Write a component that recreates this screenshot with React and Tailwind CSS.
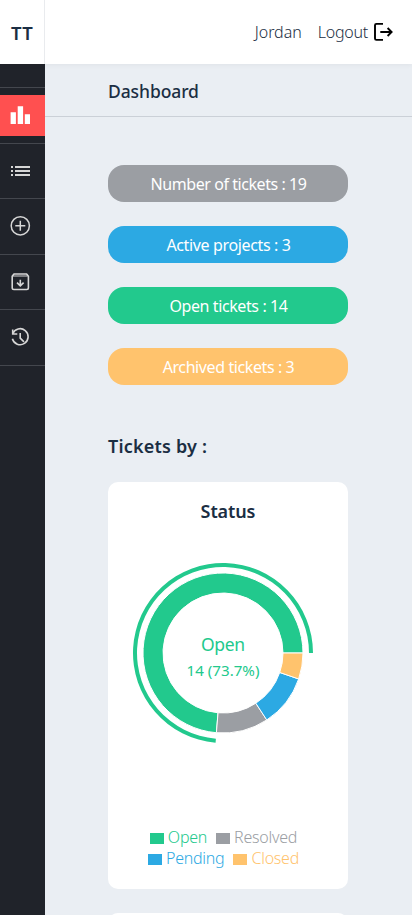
const STATS = [
  { label: "Number of tickets : 19", color: "bg-[#9b9ea3]", track: "tracking-[-0.44px]" },
  { label: "Active projects : 3", color: "bg-[#2ca9e3]", track: "tracking-[-0.36px]" },
  { label: "Open tickets : 14", color: "bg-[#22c98d]", track: "tracking-[-0.4px]" },
  { label: "Archived tickets : 3", color: "bg-[#ffc36d]", track: "tracking-[-0.4px]" },
];

const SLICES = [
  { value: 14, color: "#22c98d" },
  { value: 2, color: "#9b9ea3" },
  { value: 2, color: "#2ca9e3" },
  { value: 1, color: "#ffc36d" },
];

const point = (r, a) => `${115 + r * Math.cos(a)} ${115 - r * Math.sin(a)}`;

function ring(inner, outer, start, end) {
  const large = end - start > Math.PI ? 1 : 0;
  return `M${point(outer, start)}A${outer} ${outer} 0 ${large} 0 ${point(outer, end)}L${point(inner, end)}A${inner} ${inner} 0 ${large} 1 ${point(inner, start)}Z`;
}

function Donut() {
  let angle = 0;
  const parts = SLICES.map((slice) => {
    const start = angle;
    angle += (slice.value / 19) * Math.PI * 2;
    return { ...slice, start, end: angle };
  });
  return (
    <svg className="size-[230px]" viewBox="0 0 230 230">
      {parts.map((p) => (
        <path key={p.color} d={ring(60, 80, p.start, p.end)} fill={p.color} stroke="#fff" />
      ))}
      <path d={ring(86, 90, parts[0].start, parts[0].end)} fill="#22c98d" />
      <text x="115" y="113" textAnchor="middle" textLength="44" className="fill-[#22c98d] text-[17.5px]">Open</text>
      <text x="115" y="138" textAnchor="middle" textLength="73" lengthAdjust="spacingAndGlyphs" className="fill-[#22c98d] text-[15px]">14 (73.7%)</text>
    </svg>
  );
}

function Icon({ children, className = "" }) {
  return (
    <svg className={`size-[22px] ${className}`} viewBox="0 0 22 22" fill="none" stroke="currentColor" strokeWidth="1.6">
      {children}
    </svg>
  );
}

const BarsIcon = () => (
  <Icon>
    <path d="M.6 8.2h5.3V20H.6zM7.7 2.2h5.4V20H7.7zM14.8 10.2h5.2V20h-5.2z" fill="currentColor" stroke="none" />
  </Icon>
);

const ListIcon = () => (
  <Icon>
    <path d="M1 7h2M5 7h15M1 11h2M5 11h15M1 15h2M5 15h15" strokeWidth="2" />
  </Icon>
);

const PlusIcon = () => (
  <Icon>
    <circle cx="10.3" cy="10.8" r="9.1" strokeWidth="1.5" />
    <path d="M10.3 5.8v10M5.3 10.8h10" strokeWidth="1.5" />
  </Icon>
);

const ArchiveIcon = () => (
  <Icon>
    <path d="M2.2 5.3 4 3h12.6l1.8 2.3v11.5q0 1.7-1.7 1.7H3.9q-1.7 0-1.7-1.7z" strokeLinejoin="round" />
    <path d="M3 5h14.6" strokeWidth="1" />
    <path d="M10.3 8.8v5.8M7 11.6l3.3 3.2 3.3-3.2" />
  </Icon>
);

const HistoryIcon = () => (
  <Icon>
    <path d="M2.7 7.7A8 8 0 1 1 2.4 12.8" />
    <path d="M2.7 3.6V8h4.6" />
    <path d="M10.2 7.1v5l3.8 3.8" />
  </Icon>
);

const LogoutIcon = () => (
  <Icon className="text-black">
    <path d="M11 2.9H4.4q-1.4 0-1.4 1.4v13.2q0 1.4 1.4 1.4H11" strokeWidth="1.9" />
    <path d="M8.3 11h11M15.6 7l4 4-4 4" strokeWidth="1.9" />
  </Icon>
);

function NavItem({ children, active }) {
  return (
    <div className="flex h-[55.5px] items-center border-t border-[#44474e]">
      <div className={`flex h-[41px] w-full items-center pl-[10px] ${active ? "bg-[#ff5050] text-white" : "text-[#d6d6d6]"}`}>{children}</div>
    </div>
  );
}

function Legend({ swatch, text, children }) {
  return (
    <div className="flex items-center gap-1">
      <span className={`mt-[2px] h-[11px] w-[14px] ${swatch}`} />
      <span className={text}>{children}</span>
    </div>
  );
}

export default function App() {
  return (
    <div className="flex h-[915px] w-[412px] flex-col overflow-hidden bg-[#eaeef3] font-['Noto_Sans',sans-serif] text-[#1b2e43]">
      <header className="z-10 flex h-16 shrink-0 bg-white shadow-[0_1px_5px_rgba(0,0,0,0.05)]">
        <div className="flex w-[45px] items-center border-r border-[#e9ebee] pl-[11px] pt-[2px] text-[18.5px] font-semibold tracking-[0.3px]">TT</div>
        <div className="flex flex-1 items-center justify-end pr-[18px] text-[16px] font-light">
          <span className="mr-4 -mt-px">Jordan</span>
          <span className="mr-[4px] -mt-px tracking-[-0.25px]">Logout</span>
          <LogoutIcon />
        </div>
      </header>
      <div className="flex min-h-0 flex-1">
        <aside className="w-[45px] shrink-0 bg-[#20232a] pt-[23px]">
          <NavItem active><BarsIcon /></NavItem>
          <NavItem><ListIcon /></NavItem>
          <NavItem><PlusIcon /></NavItem>
          <NavItem><ArchiveIcon /></NavItem>
          <NavItem><HistoryIcon /></NavItem>
          <div className="border-t border-[#44474e]" />
        </aside>
        <main className="min-w-0 flex-1">
          <div className="flex h-[53px] items-center border-b border-[#cbd0d7] pl-[63px] pt-[3px] text-[17.5px]">
            <h1 className="font-medium tracking-[-0.1px]">Dashboard</h1>
          </div>
          <div className="ml-[63px] w-[240px] pt-12">
            <div className="flex flex-col gap-6">
              {STATS.map((s) => (
                <div key={s.label} className={`flex h-[37px] items-center justify-center rounded-2xl pl-px pt-px text-[16px] text-white ${s.color} ${s.track}`}>{s.label}</div>
              ))}
            </div>
            <h2 className="mt-[48px] h-[49px] text-[18px] font-semibold leading-[27px] tracking-[0.2px]">Tickets by :</h2>
            <section className="flex h-[407px] flex-col items-center rounded-[10px] bg-white pt-4">
              <h3 className="text-[18px] font-semibold leading-[27px] tracking-[-0.1px]">Status</h3>
              <div className="mr-[10px] mt-[13px] flex"><Donut /></div>
              <div className="mr-[9px] mt-[59px] flex flex-col items-center text-[16px] font-light leading-[21px] tracking-[-0.25px]">
                <div className="flex gap-[9px]">
                  <Legend swatch="bg-[#22c98d]" text="text-[#22c98d]">Open</Legend>
                  <Legend swatch="bg-[#9b9ea3]" text="text-[#9b9ea3]">Resolved</Legend>
                </div>
                <div className="flex gap-[9px]">
                  <Legend swatch="bg-[#2ca9e3]" text="text-[#2ca9e3]">Pending</Legend>
                  <Legend swatch="bg-[#ffc36d]" text="text-[#ffc36d]">Closed</Legend>
                </div>
              </div>
            </section>
            <section className="mt-6 h-24 rounded-[10px] bg-white" />
          </div>
        </main>
      </div>
    </div>
  );
}
